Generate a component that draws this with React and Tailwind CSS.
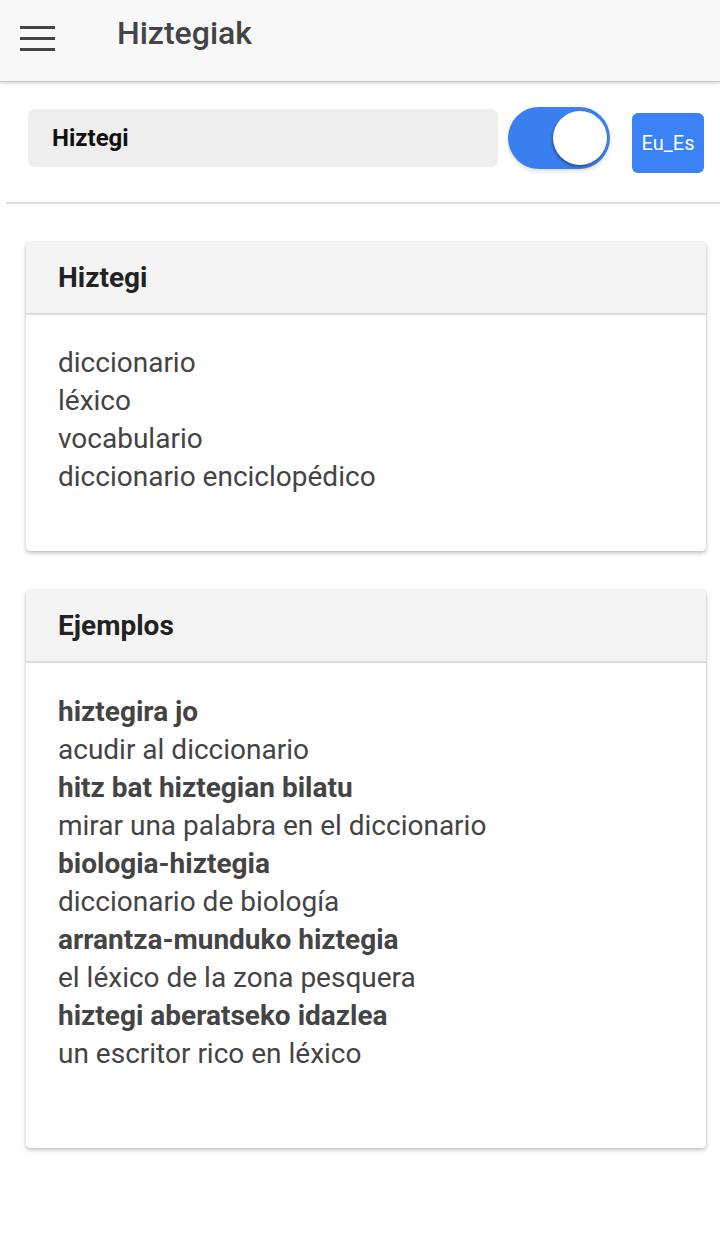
export default function App() {
  const defs = ["diccionario", "léxico", "vocabulario", "diccionario enciclopédico"];
  const examples = [
    ["hiztegira jo", "acudir al diccionario"],
    ["hitz bat hiztegian bilatu", "mirar una palabra en el diccionario"],
    ["biologia-hiztegia", "diccionario de biología"],
    ["arrantza-munduko hiztegia", "el léxico de la zona pesquera"],
    ["hiztegi aberatseko idazlea", "un escritor rico en léxico"],
  ];
  return (
    <div className="w-[720px] min-h-[1235px] bg-white" style={{ fontFamily: "Roboto, 'Noto Sans', sans-serif" }}>
      <header className="h-[82px] bg-[#f8f8f8] border-b border-[#c8c8c8] flex items-center shadow-[0_2px_2px_rgba(0,0,0,0.12)]">
        <div className="ml-[20px] w-[35px] flex flex-col gap-[8px] mt-[-4px]">
          <span className="block h-[3px] bg-[#444]" />
          <span className="block h-[3px] bg-[#444]" />
          <span className="block h-[3px] bg-[#444]" />
        </div>
        <h1 className="ml-[62px] mt-[-16px] text-[32px] font-medium text-[#444]">Hiztegiak</h1>
      </header>

      <div className="flex items-start pt-[25px] pb-[29px] pl-[22px] ml-[6px] border-b-2 border-[#ddd]">
        <div className="mt-[2px] w-[470px] h-[58px] bg-[#eeeeee] rounded-[7px] flex items-center pl-[24px] text-[24px] font-bold text-[#111]">
          Hiztegi
        </div>
        <div className="ml-[10px] w-[102px] h-[62px] rounded-full bg-[#3a7ff0] relative shadow-[0_2px_4px_rgba(0,0,0,0.15)]">
          <div className="absolute right-[3px] top-[4px] w-[54px] h-[54px] rounded-full bg-white shadow-[-1px_2px_3px_rgba(0,0,0,0.35)]" />
        </div>
        <button className="ml-[22px] mt-[6px] w-[72px] h-[60px] rounded-[6px] bg-[#3b82f6] text-white text-[20px] flex items-center justify-center">
          Eu_Es
        </button>
      </div>

      <div className="px-[26px] pt-[38px] pb-[88px] flex flex-col gap-[39px]">
        <section className="w-[680px] rounded-[4px] bg-white shadow-[0_2px_4px_rgba(0,0,0,0.25),0_0_1px_rgba(0,0,0,0.2)] overflow-hidden">
          <div className="h-[73px] bg-[#f4f4f4] border-b-2 border-[#dcdcdc] flex items-center pl-[32px] text-[28px] font-bold text-[#222]">
            Hiztegi
          </div>
          <div className="pt-[29px] pb-[55px] pl-[32px] text-[28px] leading-[38px] text-[#444]">
            {defs.map((d) => (
              <div key={d}>{d}</div>
            ))}
          </div>
        </section>

        <section className="w-[680px] rounded-[4px] bg-white shadow-[0_2px_4px_rgba(0,0,0,0.25),0_0_1px_rgba(0,0,0,0.2)] overflow-hidden">
          <div className="h-[73px] bg-[#f4f4f4] border-b-2 border-[#dcdcdc] flex items-center pl-[32px] text-[28px] font-bold text-[#222]">
            Ejemplos
          </div>
          <div className="pt-[30px] pb-[75px] pl-[32px] text-[28px] leading-[38px] text-[#444]">
            {examples.map(([a, b]) => (
              <div key={a}>
                <div className="font-bold">{a}</div>
                <div>{b}</div>
              </div>
            ))}
          </div>
        </section>
      </div>
    </div>
  );
}
